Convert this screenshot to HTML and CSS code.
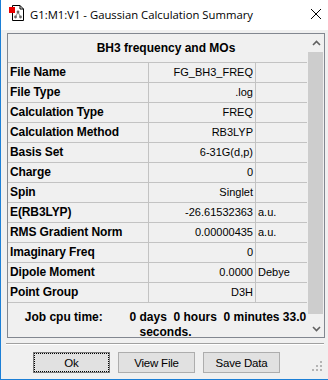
FILE: index.html
```html
<!DOCTYPE html>
<html>
<head>
<meta charset="utf-8">
<link rel="stylesheet" href="styles.css">
</head>
<body>
<div class="window">
  <div class="titlebar">
    <svg class="app-icon" width="16" height="16" viewBox="0 0 16 16">
      <path d="M3.5 0.5 H11 L14.5 4 V15.5 H3.5 Z" fill="#fff" stroke="#000" stroke-width="1"/>
      <path d="M11 0.5 V4 H14.5" fill="none" stroke="#000" stroke-width="1"/>
      <line x1="9" y1="7" x2="6.5" y2="12" stroke="#8a8a8a" stroke-width="1"/>
      <line x1="9" y1="7" x2="11.5" y2="12" stroke="#8a8a8a" stroke-width="1"/>
      <circle cx="9" cy="7" r="1.4" fill="#6a6a6a"/>
      <circle cx="6.5" cy="12" r="1.4" fill="#6a6a6a"/>
      <circle cx="11.5" cy="12" r="1.4" fill="#6a6a6a"/>
      <rect x="0" y="2" width="6" height="6" fill="#e80000"/>
    </svg>
    <span class="title">G1:M1:V1 - Gaussian Calculation Summary</span>
    <svg class="close" width="12" height="12" viewBox="0 0 12 12">
      <path d="M1 1 L11 11 M11 1 L1 11" stroke="#000" stroke-width="1"/>
    </svg>
  </div>
  <div class="client">
    <div class="panel">
      <div class="grid">
        <div class="cell head">BH3 frequency and MOs</div>

        <div class="cell label">File Name</div><div class="cell value">FG_BH3_FREQ</div><div class="cell unit"></div>
        <div class="cell label">File Type</div><div class="cell value">.log</div><div class="cell unit"></div>
        <div class="cell label">Calculation Type</div><div class="cell value">FREQ</div><div class="cell unit"></div>
        <div class="cell label">Calculation Method</div><div class="cell value">RB3LYP</div><div class="cell unit"></div>
        <div class="cell label">Basis Set</div><div class="cell value">6-31G(d,p)</div><div class="cell unit"></div>
        <div class="cell label">Charge</div><div class="cell value">0</div><div class="cell unit"></div>
        <div class="cell label">Spin</div><div class="cell value">Singlet</div><div class="cell unit"></div>
        <div class="cell label">E(RB3LYP)</div><div class="cell value">-26.61532363</div><div class="cell unit">a.u.</div>
        <div class="cell label">RMS Gradient Norm</div><div class="cell value">0.00000435</div><div class="cell unit">a.u.</div>
        <div class="cell label">Imaginary Freq</div><div class="cell value">0</div><div class="cell unit"></div>
        <div class="cell label">Dipole Moment</div><div class="cell value">0.0000</div><div class="cell unit">Debye</div>
        <div class="cell label">Point Group</div><div class="cell value">D3H</div><div class="cell unit"></div>

        <div class="cell job">Job cpu time:        0 days  0 hours  0 minutes 33.0<br>seconds.</div>
      </div>
      <div class="scrollbar">
        <div class="sb-btn">
          <svg width="9" height="6" viewBox="0 0 9 6"><path d="M1 5 L4.5 1.5 L8 5" fill="none" stroke="#606060" stroke-width="1.6"/></svg>
        </div>
        <div class="sb-thumb"></div>
        <div class="sb-btn sb-down">
          <svg width="9" height="6" viewBox="0 0 9 6"><path d="M1 1 L4.5 4.5 L8 1" fill="none" stroke="#606060" stroke-width="1.6"/></svg>
        </div>
      </div>
    </div>
    <div class="separator"></div>
    <div class="buttons">
      <button class="btn default">Ok</button>
      <button class="btn">View File</button>
      <button class="btn">Save Data</button>
    </div>
    <svg class="grip" width="11" height="11" viewBox="0 0 11 11">
      <g fill="#b4b4b4">
        <rect x="8" y="0" width="2" height="2"/>
        <rect x="4" y="4" width="2" height="2"/><rect x="8" y="4" width="2" height="2"/>
        <rect x="0" y="8" width="2" height="2"/><rect x="4" y="8" width="2" height="2"/><rect x="8" y="8" width="2" height="2"/>
      </g>
    </svg>
  </div>
</div>
</body>
</html>
```

FILE: styles.css
```css
* { box-sizing: border-box; }

html, body {
  margin: 0;
  padding: 0;
  background: #ffffff;
}

.window {
  width: 328px;
  height: 380px;
  border-left: 1px solid #1c7fd6;
  border-bottom: 1px solid #1c7fd6;
  display: flex;
  flex-direction: column;
  font-family: "Liberation Sans", Arial, sans-serif;
  color: #000;
}

.titlebar {
  height: 30px;
  flex: none;
  background: #ffffff;
  display: flex;
  align-items: center;
  padding-left: 8px;
  padding-bottom: 1px;
}

.app-icon {
  flex: none;
  margin-top: -4px;
}

.title {
  margin-left: 5px;
  font-family: "Open Sans", "Noto Sans", sans-serif;
  font-size: 11.3px;
  color: #000;
  flex: 1;
  white-space: nowrap;
}

.close {
  flex: none;
  margin-right: 6px;
  margin-top: -1px;
}

.client {
  flex: 1;
  background: #f0f0f0;
  position: relative;
  padding-top: 3px;
}

.panel {
  margin-left: 6px;
  width: 318px;
  height: 305px;
  border: 1px solid #828790;
  display: flex;
  overflow: hidden;
  background: #f0f0f0;
}

.grid {
  width: 299px;
  flex: none;
  display: grid;
  grid-template-columns: 141px 107px 51px;
  grid-auto-rows: 20px;
  align-content: start;
}

.cell {
  border-bottom: 1px solid #c3c3c3;
  font-size: 11px;
  line-height: 19px;
  white-space: nowrap;
}

.head {
  grid-column: 1 / 4;
  height: 29px;
  line-height: 28px;
  text-align: center;
  font-weight: bold;
  font-size: 12px;
  padding-left: 17px;
}

.grid .head { grid-row: 1; }

.label {
  border-right: 1px solid #c3c3c3;
  font-weight: bold;
  font-size: 12px;
  padding-left: 2px;
  letter-spacing: -0.1px;
}

.value {
  border-right: 1px solid #c3c3c3;
  text-align: right;
  padding-right: 2px;
}

.unit {
  padding-left: 2px;
}

.job {
  grid-column: 1 / 4;
  border-bottom: none;
  height: 40px;
  padding-top: 7px;
  padding-left: 16px;
  text-align: center;
  white-space: pre;
  font-weight: bold;
  font-size: 12px;
  line-height: 15px;
}

.grid { grid-template-rows: 29px; }

.scrollbar {
  width: 17px;
  flex: none;
  display: flex;
  flex-direction: column;
  background: #f0f0f0;
}

.sb-btn {
  height: 17px;
  flex: none;
  display: flex;
  align-items: center;
  justify-content: center;
  padding-left: 1px;
}

.sb-thumb {
  margin: 1px 1px 6px 1px;
  height: 262px;
  background: #cdcdcd;
}

.separator {
  margin-top: 5px;
  margin-left: 5px;
  width: 318px;
  height: 2px;
  border-top: 1px solid #a0a0a0;
  border-bottom: 1px solid #ffffff;
}

.buttons {
  display: flex;
  gap: 8px;
  padding-left: 32px;
  margin-top: 7px;
}

.btn {
  width: 77px;
  height: 21px;
  background: #e1e1e1;
  border: 1px solid #adadad;
  font-family: "Liberation Sans", Arial, sans-serif;
  font-size: 11.5px;
  color: #000;
  padding: 0;
  letter-spacing: -0.2px;
}

.btn.default {
  border-color: #7a7a7a;
  outline: 1px dotted #000;
  outline-offset: -2px;
}

.grip {
  position: absolute;
  right: 5px;
  bottom: 7px;
}
```
